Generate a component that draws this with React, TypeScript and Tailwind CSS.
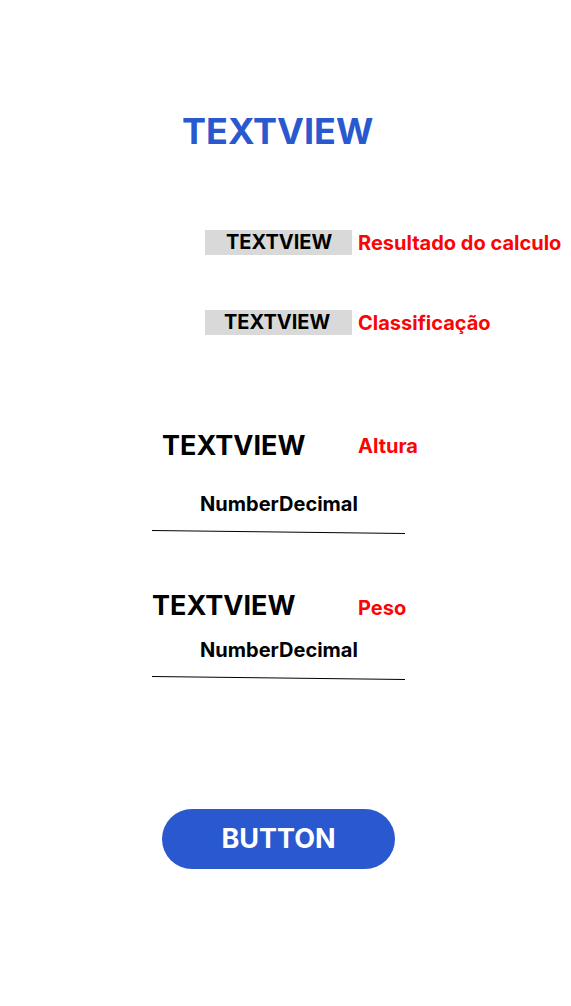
function Underline() {
  return (
    <svg className="block h-1 w-full" viewBox="0 0 253 4" preserveAspectRatio="none" aria-hidden="true">
      <path d="M0 .5 253 3.5" stroke="#000" strokeWidth="1" fill="none" />
    </svg>
  );
}

type ResultProps = { value: string; note: string; inset: string };

function Result({ value, note, inset }: ResultProps) {
  return (
    <div className="flex items-center gap-1.5 whitespace-nowrap">
      <output className={`block h-[25px] w-[147px] bg-[#d9d9d9] ${inset}`}>{value}</output>
      <span className="text-[#fa0505]">{note}</span>
    </div>
  );
}

type FieldProps = { id: string; label: string; note: string; gap: string; header: string; inset: string };

function Field({ id, label, note, gap, header, inset }: FieldProps) {
  return (
    <div>
      <div className={`flex ${header}`}>
        <label htmlFor={id} className={`w-[358px] text-[27px] leading-9 ${inset}`}>{label}</label>
        <span className="leading-8 text-[#fa0505]">{note}</span>
      </div>
      <div className={`ml-[152px] w-[253px] ${gap}`}>
        <input
          id={id}
          inputMode="decimal"
          defaultValue="NumberDecimal"
          className="block h-7 w-full bg-transparent pl-px text-center outline-none"
        />
        <div className="mt-3">
          <Underline />
        </div>
      </div>
    </div>
  );
}

export default function App() {
  return (
    <main className="min-h-screen bg-white pb-12 font-['Inter',sans-serif] text-[20px] font-bold leading-6 text-black">
      <h1 className="pt-[109px] pl-[182px] text-[36px] leading-[45px] text-[#2958cf]">TEXTVIEW</h1>
      <section className="mt-[76px] flex flex-col gap-[55px] pl-[205px]">
        <Result value="TEXTVIEW" note="Resultado do calculo" inset="pl-[21px]" />
        <Result value="TEXTVIEW" note="Classificação" inset="pl-[19px]" />
      </section>
      <form onSubmit={(event) => event.preventDefault()}>
        <div className="mt-[93px]">
          <Field id="height" label="TEXTVIEW" note="Altura" gap="mt-[26px]" header="items-center" inset="pl-[162px]" />
        </div>
        <div className="mt-[54px]">
          <Field id="weight" label="TEXTVIEW" note="Peso" gap="mt-3" header="items-end" inset="pl-[152px]" />
        </div>
        <button type="submit" className="mt-[129px] ml-[162px] h-[60px] w-[233px] rounded-full bg-[#2958cf] text-[27px] text-white">
          BUTTON
        </button>
      </form>
    </main>
  );
}
